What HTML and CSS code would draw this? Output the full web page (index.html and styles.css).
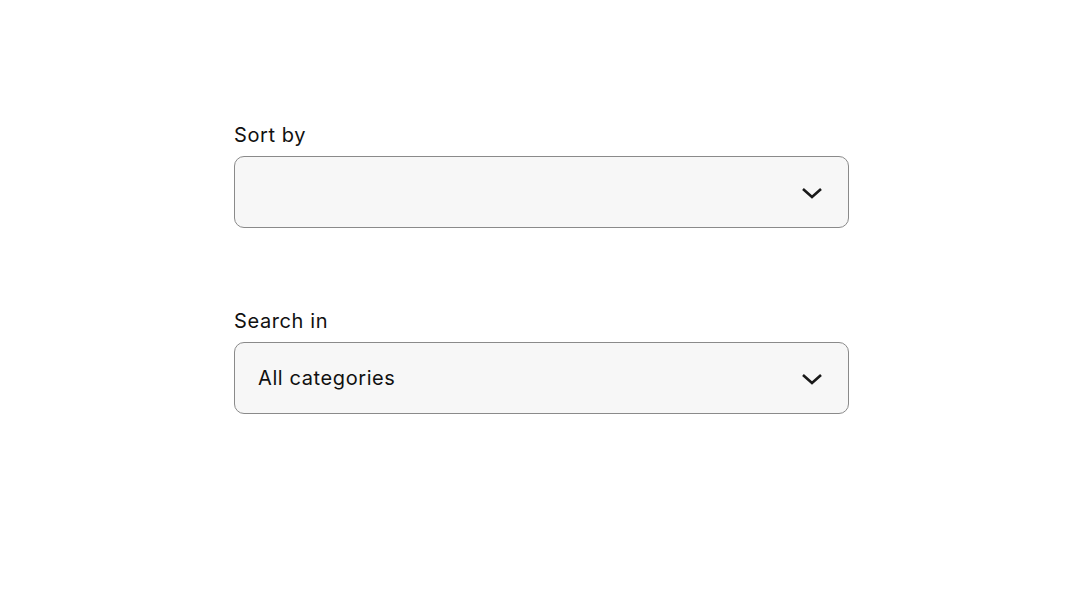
FILE: index.html
```html
<!DOCTYPE html>
<html lang="en">
  <head>
    <meta charset="UTF-8" />
    <link rel="stylesheet" href="styles.css">
    <title>Filters</title>
  </head>
  <body>
    <div class="filters">
      <div class="field">
        <label class="field-label">Sort by</label>
        <div class="select-box">
          <span class="select-value"></span>
          <svg class="chevron" width="22" height="14" viewBox="0 0 22 14">
            <path d="M2 3 L11 11 L20 3" fill="none" stroke="#191919" stroke-width="2.6" />
          </svg>
        </div>
      </div>

      <div class="field">
        <label class="field-label">Search in</label>
        <div class="select-box">
          <span class="select-value">All categories</span>
          <svg class="chevron" width="22" height="14" viewBox="0 0 22 14">
            <path d="M2 3 L11 11 L20 3" fill="none" stroke="#191919" stroke-width="2.6" />
          </svg>
        </div>
      </div>
    </div>
  </body>
</html>
```

FILE: styles.css
```css
body {
  margin: 0;
  background-color: white;
  font-family: Inter, "Noto Sans", sans-serif;
  color: #111111;
}

.filters {
  display: flex;
  flex-direction: column;
  gap: 81px;
  width: 615px;
  margin-left: 234px;
  padding-top: 123px;
}

.field {
  display: flex;
  flex-direction: column;
  gap: 9px;
}

.field-label {
  font-size: 20px;
  line-height: 24px;
  letter-spacing: 0.6px;
}

.select-box {
  display: flex;
  justify-content: space-between;
  align-items: center;
  box-sizing: border-box;
  height: 72px;
  padding: 0 25px 0 23px;
  background-color: #f7f7f7;
  border: 1.5px solid #8a8a8a;
  border-radius: 10px;
}

.select-value {
  font-size: 20px;
  letter-spacing: 0.6px;
}

.chevron {
  display: block;
  margin-top: 2px;
}
```
